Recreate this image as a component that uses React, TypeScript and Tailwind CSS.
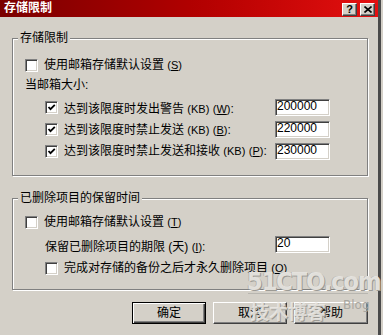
import React from 'react'

const sunken =
  'border border-t-[#808080] border-l-[#808080] border-r-white border-b-white shadow-[inset_1px_1px_0_#404040,inset_-1px_-1px_0_#d4d0c8]'

function CheckBox({ checked }: { checked?: boolean }) {
  return (
    <span className={`relative block w-[13px] h-[13px] shrink-0 bg-white ${sunken}`}>
      {checked && (
        <svg width="11" height="11" viewBox="0 0 11 11" className="absolute left-0 top-0">
          <path d="M2.5 5 L4.5 7.2 L8.8 2.8" fill="none" stroke="#000" strokeWidth="1.8" />
        </svg>
      )}
    </span>
  )
}

function Field({ value }: { value: string }) {
  return (
    <div className={`w-[55px] h-[17px] bg-white pl-[1px] text-[12px] leading-[13px] text-black ${sunken}`}>
      {value}
    </div>
  )
}

function Key({ k, plain }: { k: string; plain?: boolean }) {
  return (
    <span className="text-[11px]">
      (<span className={plain ? '' : 'underline underline-offset-1'}>{k}</span>)
    </span>
  )
}

function Group({ title, children, className }: { title: string; children: React.ReactNode; className?: string }) {
  return (
    <fieldset className={`border border-[#808080] shadow-[inset_1px_1px_0_#fff,1px_1px_0_#fff] ${className ?? ''}`}>
      <legend className="ml-[5px] px-[2px] leading-[17px] text-[12px] bg-[#d4d0c8] text-black">{title}</legend>
      {children}
    </fieldset>
  )
}

function TitleButton({ children }: { children: React.ReactNode }) {
  return (
    <div className="w-[15px] h-[13px] bg-[#d4d0c8] border border-t-white border-l-white border-r-[#404040] border-b-[#404040] shadow-[inset_-1px_-1px_0_#808080] flex items-center justify-center text-black">
      {children}
    </div>
  )
}

function Button({ label, isDefault }: { label: string; isDefault?: boolean }) {
  const cls = isDefault
    ? 'border border-black shadow-[inset_1px_1px_0_#fff,inset_-1px_-1px_0_#404040,inset_-2px_-2px_0_#808080]'
    : 'border border-t-white border-l-white border-r-[#404040] border-b-[#404040] shadow-[inset_-1px_-1px_0_#808080]'
  return (
    <button className={`w-[74px] h-[22px] bg-[#d4d0c8] text-[12px] text-black flex items-center justify-center ${cls}`}>
      {label}
    </button>
  )
}

export default function App() {
  return (
    <div className="w-[383px] h-[335px] bg-[#d4d0c8] flex font-['Liberation_Sans','Noto_Sans_CJK_SC',sans-serif] text-[12px] text-black overflow-hidden">
      <div className="relative w-[381px] h-full border-r-[3px] border-[#4a4a4a] flex flex-col">
        {/* title bar */}
        <div className="h-[17px] shrink-0 flex items-center bg-gradient-to-r from-[#7a0000] via-[#b00000] to-[#e41010] pl-[4px] pr-[3px]">
          <span className="text-white font-bold text-[12px] leading-[17px]">存储限制</span>
          <div className="ml-auto flex gap-[3px] mt-[1px]">
            <TitleButton>
              <span className="font-bold text-[11px] leading-none font-['Liberation_Sans',sans-serif]">?</span>
            </TitleButton>
            <TitleButton>
              <svg width="8" height="7" viewBox="0 0 8 7">
                <path d="M0.5 0.5 L7.5 6.5 M7.5 0.5 L0.5 6.5" stroke="#000" strokeWidth="1.6" />
              </svg>
            </TitleButton>
          </div>
        </div>

        <div className="pl-[12px] pr-[10px] flex flex-col">
          <Group title="存储限制" className="mt-[13px]">
            <div className="pl-[12px] pr-[37px] pt-[8px] pb-[13px] flex flex-col">
              <div className="h-[20px] flex items-center gap-[6px]">
                <CheckBox />
                <span>使用邮箱存储默认设置 <Key k="S" /></span>
              </div>
              <div className="h-[20px] flex items-center">当邮箱大小:</div>
              <div className="mt-[1px] h-[22px] flex items-center pl-[20px]">
                <CheckBox checked />
                <span className="ml-[6px] mt-[3px]">达到该限度时发出警告 <Key k="KB" plain /> <Key k="W" />:</span>
                <div className="ml-auto"><Field value="200000" /></div>
              </div>
              <div className="h-[22px] flex items-center pl-[20px]">
                <CheckBox checked />
                <span className="ml-[6px] mt-[2px]">达到该限度时禁止发送 <Key k="KB" plain /> <Key k="B" />:</span>
                <div className="ml-auto"><Field value="220000" /></div>
              </div>
              <div className="h-[22px] flex items-center pl-[20px]">
                <CheckBox checked />
                <span className="ml-[6px]">达到该限度时禁止发送和接收 <Key k="KB" plain /> <Key k="P" />:</span>
                <div className="ml-auto"><Field value="230000" /></div>
              </div>
            </div>
          </Group>

          <Group title="已删除项目的保留时间" className="mt-[14px]">
            <div className="pl-[12px] pr-[37px] pt-[5px] pb-[11px] flex flex-col">
              <div className="h-[20px] flex items-center gap-[6px]">
                <CheckBox />
                <span>使用邮箱存储默认设置 <Key k="T" /></span>
              </div>
              <div className="mt-[1px] h-[22px] flex items-center pl-[20px]">
                <span className="mt-[5px]">保留已删除项目的期限 (天) <Key k="I" />:</span>
                <div className="ml-auto"><Field value="20" /></div>
              </div>
              <div className="mt-[3px] h-[20px] flex items-center pl-[20px] gap-[6px]">
                <CheckBox />
                <span>完成对存储的备份之后才永久删除项目 <Key k="O" /></span>
              </div>
            </div>
          </Group>

          <div className="mt-[12px] flex justify-end gap-[7px]">
            <Button label="确定" isDefault />
            <Button label="取消" />
            <Button label="帮助" />
          </div>
        </div>

        {/* 51CTO watermark */}
        <div className="absolute left-[247px] top-[272px] pointer-events-none select-none font-['DejaVu_Sans_Condensed','DejaVu_Sans',sans-serif] font-bold text-[25px] leading-[19px] tracking-[-1px] text-[#ebe9e5]/90 [text-shadow:1px_1px_0_#9c9a94,-1px_0_0_#b8b6b0]">
          51CTO.com
        </div>
        <div className="absolute left-[248px] top-[293px] w-[120px] h-[1px] bg-[#b8b6b0] pointer-events-none" />
        <div className="absolute left-[250px] top-[300px] pointer-events-none select-none font-['Noto_Sans_CJK_SC',sans-serif] font-bold text-[19px] leading-[22px] text-[#eeece8]/80 [text-shadow:1px_1px_0_#9c9a94]">
          技术博客
        </div>
        <div className="absolute left-[343px] top-[298px] pointer-events-none select-none font-['DejaVu_Sans',sans-serif] text-[12px] leading-[14px] text-[#a9a7a1]">
          Blog
        </div>
      </div>
    </div>
  )
}
